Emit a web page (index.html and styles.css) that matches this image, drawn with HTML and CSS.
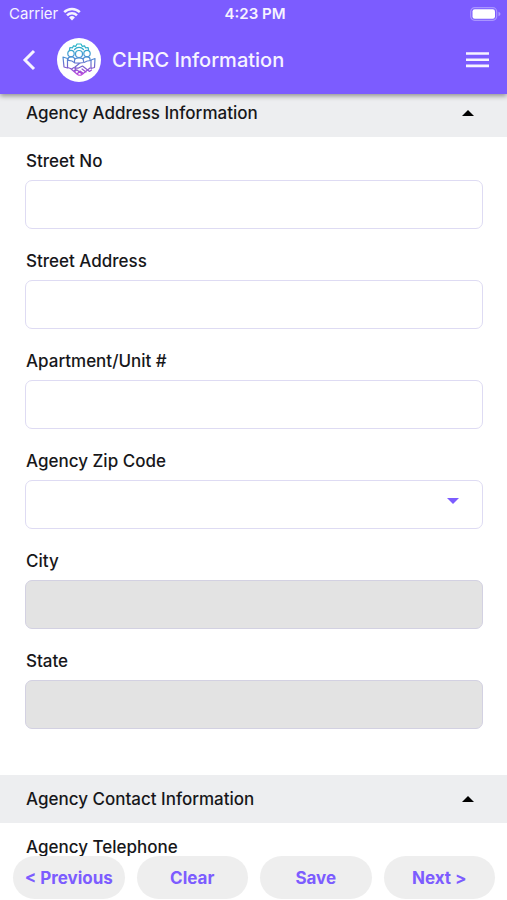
FILE: index.html
```html
<!DOCTYPE html>
<html lang="en">
<head>
<meta charset="utf-8">
<meta name="viewport" content="width=device-width, initial-scale=1">
<title>CHRC Information</title>
<link rel="stylesheet" href="styles.css">
</head>
<body>
<div class="app">
  <header class="header">
    <div class="status">
      <div class="carrier">
        <span>Carrier</span>
        <svg class="wifi" viewBox="0 0 18 14" aria-hidden="true">
          <path d="M1.2 5.2a11.2 11.2 0 0 1 15.6 0M4 8.3a7.2 7.2 0 0 1 10 0" fill="none" stroke="currentColor" stroke-width="2.5"/>
          <path d="M9 13.4 6.1 10.5a4.1 4.1 0 0 1 5.8 0z" fill="currentColor"/>
        </svg>
      </div>
      <span class="time">4:23 PM</span>
      <svg class="battery" viewBox="0 0 31 14" aria-hidden="true">
        <rect x=".7" y=".7" width="26" height="12.6" rx="4" fill="none" stroke="#fff" stroke-opacity=".35" stroke-width="1.2"/>
        <rect x="2.500" y="2.300" width="22.500" height="9.400" rx="2.200" fill="#fff"/>
        <path d="M28.5 4.800v4.400q2-.8 2-2.200t-2-2.200z" fill="#fff" fill-opacity=".4"/>
      </svg>
    </div>
    <div class="nav">
      <button class="icon-button back" type="button" aria-label="Back">
        <svg viewBox="0 0 14 22" width="14" height="22"><path d="M12 2 3 11l9 9" fill="none" stroke="currentColor" stroke-width="3"/></svg>
      </button>
      <svg class="logo" viewBox="0 0 44 44" aria-hidden="true">
        <defs>
          <linearGradient id="ink" gradientUnits="userSpaceOnUse" x1="0" y1="6" x2="0" y2="38">
            <stop offset="0" stop-color="#25b8c6"/>
            <stop offset=".4" stop-color="#4a93d4"/>
            <stop offset=".7" stop-color="#7562cc"/>
            <stop offset="1" stop-color="#c63fe0"/>
          </linearGradient>
        </defs>
        <circle cx="22" cy="22" r="22" fill="#fff"/>
        <g fill="none" stroke="url(#ink)" stroke-width="1.200" stroke-linejoin="round" stroke-linecap="round">
          <path d="M12.500 11.500l.5-2 2.500.3 1-2 2.300.5 1.200-2.300h4l1.200 2.300 2.300-.5 1 2 2.500-.3.5 2"/>
          <path d="M17.500 11.500a6 6 0 0 1 9 0"/>
          <circle cx="14" cy="15.500" r="3.200"/>
          <circle cx="22" cy="16" r="3.500"/>
          <circle cx="30" cy="15.500" r="3.200"/>
          <path d="M11 22.500v-1.500q0-2.200 3-2.200t3.500 1.700M33 22.500v-1.500q0-2.200-3-2.200t-3.500 1.700M17.500 24.500v-2q0-2.700 4.500-2.700t4.500 2.700v1"/>
          <path d="M6 19l4.500 1.500v9.500l-3.500-1zM38 20.500l-4 1.500v8.500l3.500-1z"/>
          <path d="M10.500 22.500q4-.5 7.500 2.500l5 .2M34 22.500q-4 0-7 2l-4 .5-5 4q1.500 2.200 4.500.5l3-1.500 7 5.500 2-1.500"/>
          <path d="M10.500 29.500l3 1 7 6q2.500 1.500 4.500 0l8-6.500M14.500 31l2.500-1.500 2 1.500-2 2M17.500 33.500l2.500-1.500 2 1.500-2 2.500M20.500 35.500l2-1.500 2 1.500M25 31l4 3M23 33l3.500 2.500"/>
        </g>
      </svg>
      <h1 class="title">CHRC Information</h1>
      <button class="icon-button" type="button" aria-label="Menu">
        <svg viewBox="0 0 23 16" width="23" height="16"><path d="M0 1.500h23M0 7.700h23M0 13.900h23" stroke="currentColor" stroke-width="2.600"/></svg>
      </button>
    </div>
  </header>

  <main class="content">
    <section>
      <h2 class="section-head"><button class="section-toggle" type="button" aria-expanded="true">Agency Address Information <svg class="caret" viewBox="0 0 12 6" aria-hidden="true"><path d="M0 6 6 0l6 6z" fill="#000"/></svg></button></h2>
      <div class="fields">
        <div class="field"><label for="street-no">Street No</label><input id="street-no" type="text"></div>
        <div class="field"><label for="street">Street Address</label><input id="street" type="text"></div>
        <div class="field"><label for="unit">Apartment/Unit #</label><input id="unit" type="text"></div>
        <div class="field">
          <label for="zip">Agency Zip Code</label>
          <div class="select-wrap">
            <select id="zip"><option></option></select>
            <svg class="select-caret" viewBox="0 0 12 6" aria-hidden="true"><path d="M0 0h12L6 6z" fill="#7c5cff"/></svg>
          </div>
        </div>
        <div class="field"><label for="city">City</label><input id="city" type="text" disabled></div>
        <div class="field"><label for="state">State</label><input id="state" type="text" disabled></div>
      </div>
    </section>
    <section>
      <h2 class="section-head"><button class="section-toggle" type="button" aria-expanded="true">Agency Contact Information <svg class="caret" viewBox="0 0 12 6" aria-hidden="true"><path d="M0 6 6 0l6 6z" fill="#000"/></svg></button></h2>
      <div class="fields">
        <div class="field"><label for="phone">Agency Telephone</label><input id="phone" type="tel"></div>
      </div>
    </section>
  </main>

  <footer class="actions">
    <button type="button">&lt; Previous</button>
    <button type="button">Clear</button>
    <button type="button">Save</button>
    <button type="button">Next &gt;</button>
  </footer>
</div>
</body>
</html>
```
FILE: styles.css
```css
* {
  box-sizing: border-box;
}

body {
  margin: 0;
  background: #fff;
  color: #17171a;
  font-family: Inter, "Liberation Sans", sans-serif;
  font-size: 17px;
  font-weight: 500;
  line-height: 24px;
}

button,
input,
select {
  font: inherit;
  color: inherit;
}

.app {
  display: flex;
  flex-direction: column;
  height: 100vh;
}

.header {
  position: relative;
  z-index: 1;
  padding-bottom: 12px;
  background: #7c5cff;
  color: #f6f3ff;
  box-shadow: 0 2px 5px rgba(0, 0, 0, 0.4);
}

.status {
  display: grid;
  grid-template-columns: 1fr auto 1fr;
  align-items: center;
  height: 27px;
  padding: 0 6px 0 9px;
  font-size: 15px;
  line-height: 20px;
}

.carrier {
  display: flex;
  align-items: center;
  gap: 5px;
  font-weight: 400;
}

.wifi {
  width: 18px;
  height: 14px;
}

.time {
  font-weight: 600;
}

.battery {
  justify-self: end;
  width: 31px;
  height: 14px;
}

.nav {
  display: flex;
  align-items: center;
  min-height: 55px;
  padding: 10px 18px 0 22px;
}

.icon-button {
  display: flex;
  padding: 0;
  border: 0;
  background: none;
  cursor: pointer;
}

.back {
  margin-right: 21px;
}

.logo {
  width: 44px;
  height: 44px;
  margin-right: 11px;
}

.title {
  flex: 1;
  margin: 0;
  font-size: 20px;
  font-weight: 500;
}

.content {
  flex: 1;
  min-height: 0;
  margin-top: -5px;
  overflow-y: auto;
  scrollbar-width: none;
}

.section-head {
  margin: 0;
  font-size: 17px;
  font-weight: 500;
}

.section-toggle {
  display: flex;
  align-items: center;
  justify-content: space-between;
  width: 100%;
  min-height: 48px;
  padding: 0 33px 0 26px;
  border: 0;
  background: #edeef0;
  text-align: left;
  cursor: pointer;
}

.caret {
  width: 12px;
  height: 6px;
}

.fields {
  display: grid;
  gap: 20px;
  padding: 12px 24px 46px 25px;
}

.field {
  display: grid;
  gap: 7px;
}

label {
  padding-left: 1px;
}

input,
select {
  display: block;
  width: 100%;
  height: 49px;
  padding: 0 14px;
  border: 1px solid #dedbf3;
  border-radius: 7px;
  background: #fff;
}

input:disabled {
  border-color: #d3d1e2;
  background: #e3e3e3;
}

.select-wrap {
  position: relative;
}

select {
  appearance: none;
}

.select-caret {
  position: absolute;
  top: 18px;
  right: 24px;
  width: 12px;
  height: 6px;
  pointer-events: none;
}

.actions {
  display: grid;
  grid-template-columns: repeat(4, 1fr);
  gap: 12px;
  padding: 0 12px 1px 13px;
}

.actions button {
  height: 43px;
  padding: 0;
  border: 0;
  border-radius: 22px;
  background: #eee;
  color: #7c5cff;
  font-weight: 700;
  white-space: nowrap;
  cursor: pointer;
}
```
